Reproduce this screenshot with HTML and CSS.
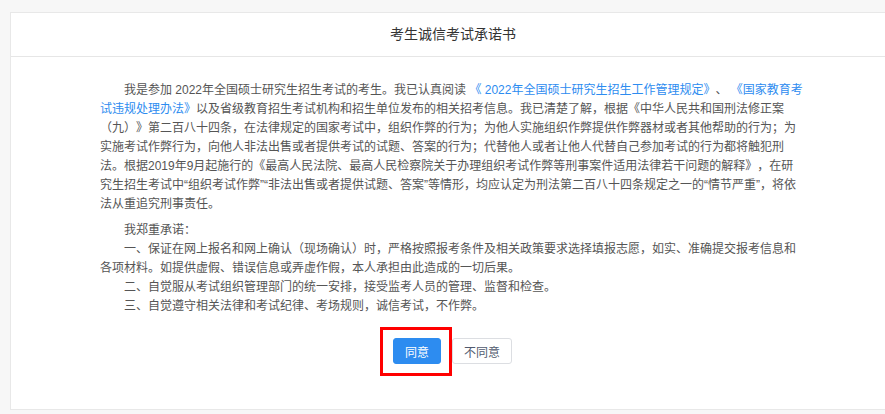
FILE: index.html
```html
<!DOCTYPE html>
<html lang="zh-CN">

<head>
    <meta charset="UTF-8">
    <meta name="viewport" content="width=device-width, initial-scale=1.0">
    <title>考生诚信考试承诺书</title>
    <link rel="stylesheet" href="styles.css">
</head>

<body>
    <div class="card">
        <div class="card-header">考生诚信考试承诺书</div>

        <div class="card-body">
            <div class="promise">
                <p class="lead">我是参加 2022年全国硕士研究生招生考试的考生。我已认真阅读 <a href="#">《 2022年全国硕士研究生招生工作管理规定》</a>、 <a href="#">《国家教育考试违规处理办法》</a>以及省级教育招生考试机构和招生单位发布的相关招考信息。我已清楚了解，根据《中华人民共和国刑法修正案（九）》第二百八十四条，在法律规定的国家考试中，组织作弊的行为；为他人实施组织作弊提供作弊器材或者其他帮助的行为；为实施考试作弊行为，向他人非法出售或者提供考试的试题、答案的行为；代替他人或者让他人代替自己参加考试的行为都将触犯刑法。根据2019年9月起施行的《最高人民法院、最高人民检察院关于办理组织考试作弊等刑事案件适用法律若干问题的解释》，在研究生招生考试中“组织考试作弊”“非法出售或者提供试题、答案”等情形，均应认定为刑法第二百八十四条规定之一的“情节严重”，将依法从重追究刑事责任。</p>

                <p>我郑重承诺：</p>
                <p>一、保证在网上报名和网上确认（现场确认）时，严格按照报考条件及相关政策要求选择填报志愿，如实、准确提交报考信息和各项材料。如提供虚假、错误信息或弄虚作假，本人承担由此造成的一切后果。</p>
                <p>二、自觉服从考试组织管理部门的统一安排，接受监考人员的管理、监督和检查。</p>
                <p>三、自觉遵守相关法律和考试纪律、考场规则，诚信考试，不作弊。</p>
            </div>

            <div class="actions">
                <span class="marked">
                    <button type="button" class="btn btn-primary">同意</button>
                </span>
                <button type="button" class="btn">不同意</button>
            </div>
        </div>
    </div>
</body>

</html>
```

FILE: styles.css
```css
html,
body {
    overflow: hidden;
}

body {
    margin: 0;
    padding: 12px 0 0 10px;
    background-color: #f7f7f7;
    font-family: "Liberation Sans", "Noto Sans CJK SC", sans-serif;
    font-size: 12px;
    color: #555;
    text-spacing-trim: space-all;
}

.card {
    width: 884px;
    background-color: #fff;
    border: 1px solid #e8e8e8;
}

.card-header {
    height: 43px;
    line-height: 43px;
    text-align: center;
    font-size: 14px;
    color: #333;
    border-bottom: 1px solid #e6e6e6;
}

.card-body {
    padding: 24px 90px 45px 89px;
}

.promise {
    width: 705px;
}

.promise p {
    margin: 0;
    line-height: 19px;
    text-indent: 2em;
}

.promise p.lead {
    margin-bottom: 7px;
}

a {
    color: #2d8cf0;
    text-decoration: none;
}

.actions {
    display: flex;
    justify-content: center;
    gap: 11px;
    margin-top: 22px;
}

.marked {
    position: relative;
    display: flex;
}

.marked::after {
    content: "";
    position: absolute;
    left: -13px;
    right: -11px;
    top: -11px;
    bottom: -12px;
    border: 3px solid #f00;
}

.btn {
    height: 26px;
    padding: 0 11px;
    font-family: inherit;
    font-size: 12px;
    color: #515a6e;
    background-color: #fff;
    border: 1px solid #dcdee2;
    border-radius: 3px;
    cursor: pointer;
}

.btn-primary {
    width: 48px;
    color: #fff;
    background-color: #2d8cf0;
    border-color: #2d8cf0;
}
```
